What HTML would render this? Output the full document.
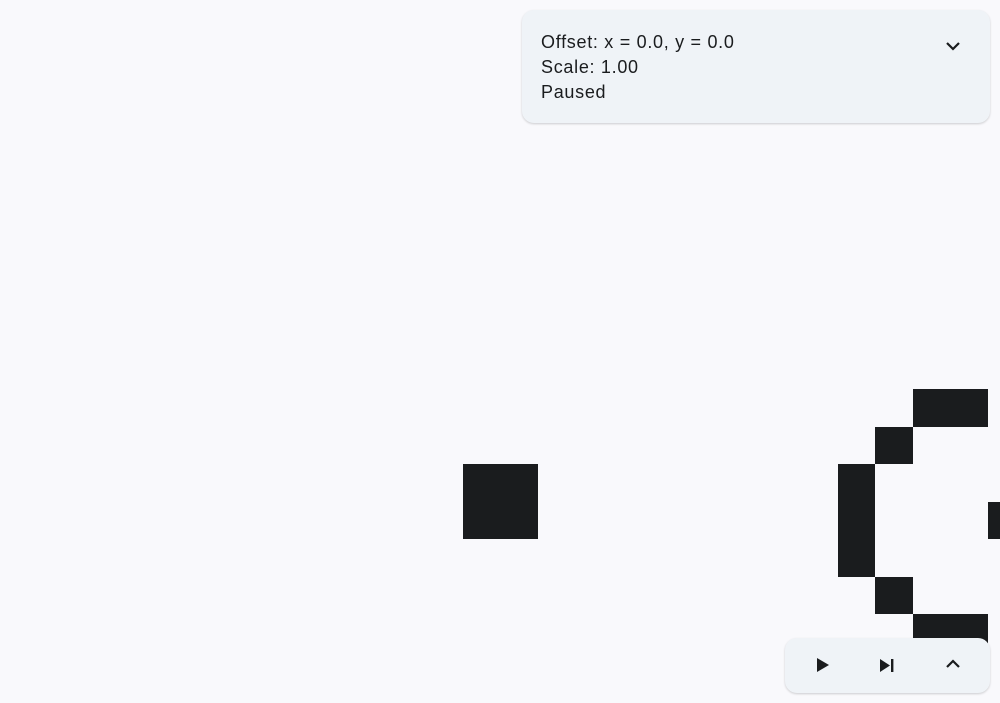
<!DOCTYPE html>
<html><head><meta charset="utf-8"><style>
html,body{margin:0;padding:0;width:1000px;height:703px;overflow:hidden;background:#f9f9fc;font-family:"Liberation Sans",sans-serif;}
.c{position:absolute;background:#1a1c1e;}
.panel{position:absolute;left:522px;top:10px;width:468px;height:113px;background:#eff3f7;border-radius:12px;box-shadow:0 1px 2px rgba(0,0,0,0.18);}
.txt{position:absolute;left:19px;top:20px;font-size:18px;line-height:25px;color:#1a1c1e;letter-spacing:0.7px;}
.bar{position:absolute;left:785px;top:638px;width:205px;height:55px;background:#eff3f7;border-radius:12px;box-shadow:0 1px 2px rgba(0,0,0,0.18);}
svg{position:absolute;}
</style></head><body>
<div class="c" style="left:462.5px;top:464px;width:75px;height:75px"></div>
<div class="c" style="left:912.5px;top:389px;width:75px;height:37.5px"></div>
<div class="c" style="left:875px;top:426.5px;width:37.5px;height:37.5px"></div>
<div class="c" style="left:837.5px;top:464px;width:37.5px;height:112.5px"></div>
<div class="c" style="left:875px;top:576.5px;width:37.5px;height:37.5px"></div>
<div class="c" style="left:912.5px;top:614px;width:75px;height:37.5px"></div>
<div class="c" style="left:987.5px;top:501.5px;width:37.5px;height:37.5px"></div>
<div class="panel">
<div class="txt">Offset: x = 0.0, y = 0.0<br>Scale: 1.00<br>Paused</div>
<svg style="left:422px;top:30px" width="18" height="14" viewBox="0 0 18 14"><path d="M3 3 L9 9 L15 3" fill="none" stroke="#1a1c1e" stroke-width="2.2"/></svg>
</div>
<div class="bar">
<svg style="left:31px;top:19px" width="14" height="16" viewBox="0 0 14 16"><path d="M1 1 L13 8 L1 15 Z" fill="#1a1c1e"/></svg>
<svg style="left:94px;top:20px" width="16" height="15" viewBox="0 0 16 15"><path d="M1 1 L11 7.5 L1 14 Z" fill="#1a1c1e"/><rect x="12" y="1" width="2.4" height="13" fill="#1a1c1e"/></svg>
<svg style="left:159px;top:20px" width="18" height="12" viewBox="0 0 18 12"><path d="M3 9 L9 3 L15 9" fill="none" stroke="#1a1c1e" stroke-width="2.2"/></svg>
</div>
</body></html>
